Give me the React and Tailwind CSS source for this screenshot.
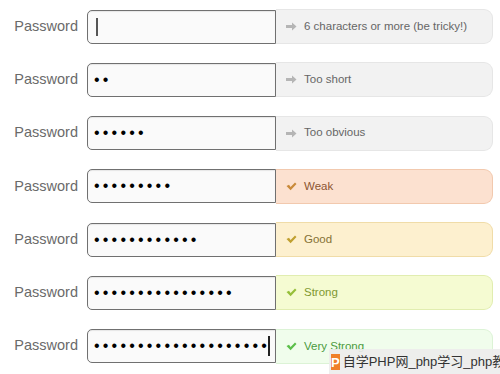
const rows = [
  { dots: 0, hint: '6 characters or more (be tricky!)', kind: 'info', cursor: 'start' },
  { dots: 2, hint: 'Too short', kind: 'info' },
  { dots: 6, hint: 'Too obvious', kind: 'info' },
  { dots: 9, hint: 'Weak', kind: 'weak' },
  { dots: 12, hint: 'Good', kind: 'good' },
  { dots: 16, hint: 'Strong', kind: 'strong' },
  { dots: 20, hint: 'Very Strong', kind: 'very', cursor: 'end' },
];

const styles = {
  info: { box: 'bg-[#f2f2f2] border-[#e6e6e6] text-[#666]', icon: '#b5b5b5' },
  weak: { box: 'bg-[#fce1d0] border-[#f2c9ae] text-[#8c5530]', icon: '#c98a3a' },
  good: { box: 'bg-[#fdf0cf] border-[#f0dca8] text-[#857236]', icon: '#c0a030' },
  strong: { box: 'bg-[#f5fbd2] border-[#e1edb0] text-[#7f9830]', icon: '#96bf3a' },
  very: { box: 'bg-[#f0fdec] border-[#dcf3d6] text-[#4a9a3e]', icon: '#5cbf4a' },
};

function Arrow({ color }) {
  return (
    <svg width="11" height="9" viewBox="0 0 11 9">
      <path d="M0 3 H6 V0.5 L10.5 4.5 L6 8.5 V6 H0 Z" fill={color} />
    </svg>
  );
}

function Check({ color }) {
  return (
    <svg width="11" height="9" viewBox="0 0 11 9">
      <path d="M0.5 4 L3 2.8 L4.6 5 L9 0.5 L10.5 2 L4.6 8.3 Z" fill={color} />
    </svg>
  );
}

function Row({ dots, hint, kind, cursor }) {
  const s = styles[kind];
  return (
    <div className="flex items-center">
      <div className="w-[87px] pr-[9px] text-right text-[14.5px] text-[#6a6a6a]">Password</div>
      <div className="w-[189px] h-[34px] bg-[#fafafa] border-[1.5px] border-[#707070] rounded-l-[5px] flex items-center pl-[6px] shadow-[inset_0_1px_1px_rgba(0,0,0,0.08)]">
        {cursor === 'start' && <div className="w-[1.5px] h-[18px] bg-[#555] ml-[2px]" />}
        <span className="text-[16px] leading-none tracking-[3.2px] text-black font-['Liberation_Sans',sans-serif]">
          {'•'.repeat(dots)}
        </span>
        {cursor === 'end' && <div className="w-[1.5px] h-[20px] bg-[#222] -ml-[2px]" />}
      </div>
      <div className={`w-[217px] h-[35px] border border-l-0 rounded-r-[9px] flex items-center gap-[7px] pl-[10px] text-[11.5px] ${s.box}`}>
        {kind === 'info' ? <Arrow color={s.icon} /> : <Check color={s.icon} />}
        <span>{hint}</span>
      </div>
    </div>
  );
}

export default function App() {
  return (
    <div className="relative w-[500px] h-[374px] bg-white overflow-hidden font-['Liberation_Sans',sans-serif]">
      <div className="flex flex-col gap-[18.3px] pt-[9px]">
        {rows.map((r, i) => (
          <Row key={i} {...r} />
        ))}
      </div>
      <div className="absolute left-[329px] top-[349px] w-[180px] h-[26px] bg-[#ececec]/90 flex items-center gap-[3px] pl-[2px]">
        <div className="w-[16px] h-[16px] bg-[#f0802a] flex items-center justify-center text-white text-[13px] font-bold leading-none">P</div>
        <span className="text-[13px] text-[#333] whitespace-nowrap font-['Liberation_Sans','Noto_Sans_CJK_SC',sans-serif]">自学PHP网_php学习_php教程</span>
      </div>
    </div>
  );
}
